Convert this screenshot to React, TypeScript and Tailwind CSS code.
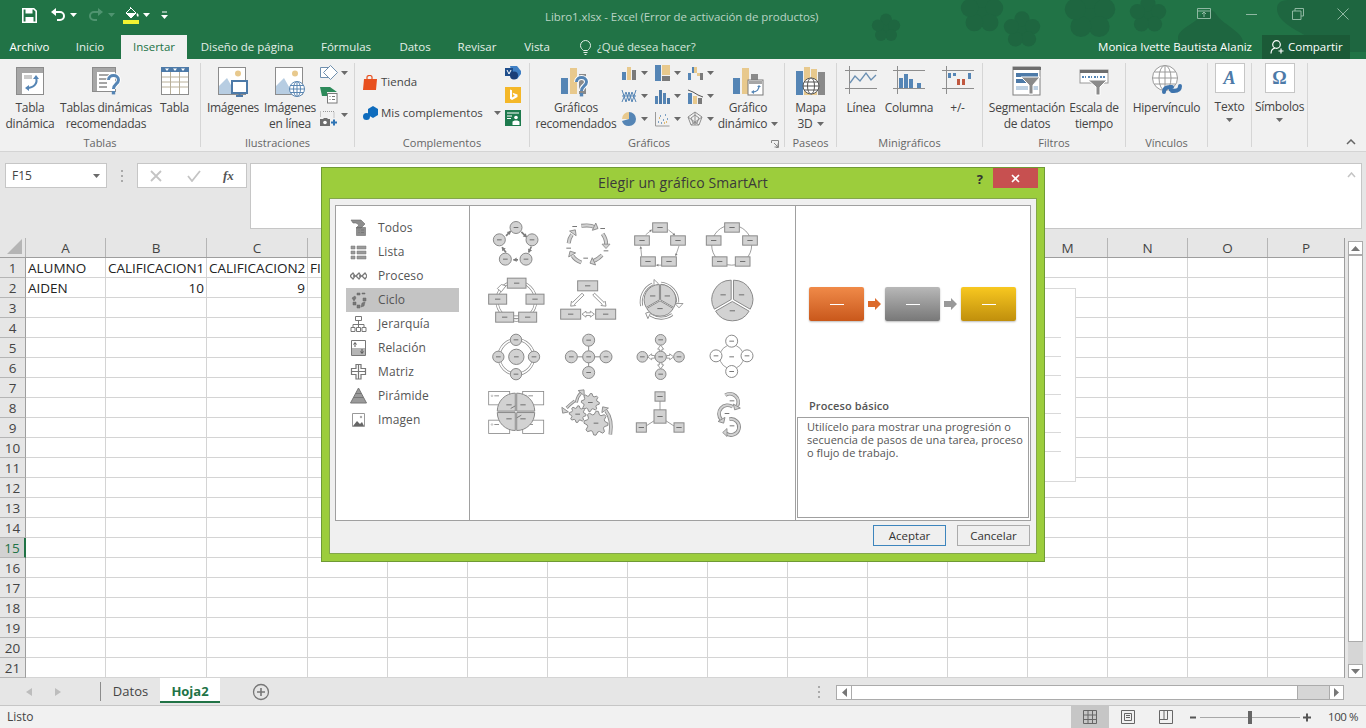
import type { ReactNode } from 'react'

const BLUE = '#5585b5'
const TAN = '#e8c98d'
const GREY = '#a6a6a6'
const STROKE = '#8a8a8a'
const FILL = '#d2d2d2'
const DASH = '#5c5c5c'

const COLUMNS: [string, number][] = [
  ['A', 80], ['B', 101], ['C', 101], ['D', 80], ['E', 80], ['F', 80], ['G', 80], ['H', 80],
  ['I', 80], ['J', 80], ['K', 80], ['L', 80], ['M', 80], ['N', 80], ['O', 80], ['P', 76],
]

const ROWS: Record<number, Record<string, { text: string; right?: boolean }>> = {
  1: {
    A: { text: 'ALUMNO' },
    B: { text: 'CALIFICACION1' },
    C: { text: 'CALIFICACION2' },
    D: { text: 'FINAL' },
  },
  2: {
    A: { text: 'AIDEN' },
    B: { text: '10', right: true },
    C: { text: '9', right: true },
  },
}

function Caret({ className = '' }: { className?: string }) {
  return (
    <svg width="7" height="4" viewBox="0 0 7 4" className={className}>
      <path d="M0 0h7L3.5 4z" fill="#6a6a6a" />
    </svg>
  )
}

/* ---------- ribbon icons ---------- */

function HelpMark({ x, y, scale = 1 }: { x: number; y: number; scale?: number }) {
  return (
    <g transform={`translate(${x} ${y}) scale(${scale})`}>
      <path d="M1.500 5C1.500-1 11.500-1 11.500 5c0 4-5 4-5 9" fill="none" stroke="#fff" strokeWidth="5" />
      <path d="M1.500 5C1.500-1 11.500-1 11.500 5c0 4-5 4-5 9" fill="none" stroke={BLUE} strokeWidth="3" />
      <rect x="4.800" y="16" width="3.400" height="3.400" fill={BLUE} />
    </g>
  )
}

function IconPivot() {
  return (
    <svg width="30" height="30" viewBox="0 0 30 30">
      <rect x="1.5" y="1.5" width="27" height="27" fill="#fff" stroke="#8c8c8c" />
      <rect x="2" y="2" width="26" height="5" fill={GREY} />
      <rect x="2" y="7" width="5" height="21" fill={GREY} />
      <rect x="9" y="9" width="8" height="4" fill={GREY} opacity="0.6" />
      <path d="M21 12c2 5-2 10-9 10" fill="none" stroke={BLUE} strokeWidth="2" />
      <path d="M18 13l3-4 3 4zM14 19l-4 3 4 3z" fill={BLUE} />
    </svg>
  )
}

function IconPivotHelp() {
  return (
    <svg width="30" height="30" viewBox="0 0 30 30">
      <rect x="1.5" y="1.5" width="23" height="24" fill="#fff" stroke="#8c8c8c" />
      <rect x="2" y="2" width="22" height="4" fill={GREY} />
      <rect x="2" y="6" width="4" height="19" fill={GREY} />
      <path d="M8 9h10M8 13h8M8 17h8M8 21h8" stroke={GREY} strokeWidth="2" />
      <HelpMark x={16} y={9} />
    </svg>
  )
}

function IconTable() {
  return (
    <svg width="30" height="30" viewBox="0 0 30 30">
      <rect x="1.5" y="1.5" width="27" height="27" fill="#fff" stroke="#8c8c8c" />
      <rect x="1" y="1" width="28" height="5" fill="#4d7aa8" />
      <path d="M5 2.500h4L7 5zM13 2.500h4L15 5zM21 2.500h4L23 5z" fill="#fff" />
      <path d="M2 11h26M2 16h26M2 21h26M10.500 6v22M19.500 6v22" stroke="#b9b09a" />
    </svg>
  )
}

function IconPicture({ badge }: { badge: ReactNode }) {
  return (
    <svg width="32" height="32" viewBox="0 0 32 32">
      <rect x="1.500" y="1.500" width="27" height="27" fill="#fff" stroke="#8c8c8c" />
      <circle cx="21" cy="7.500" r="3" fill={TAN} />
      <path d="M2 28V20l8-8 9 16z" fill="#b7cde2" />
      {badge}
    </svg>
  )
}

const MONITOR = (
  <g>
    <rect x="15" y="15" width="15" height="12" fill="#fff" stroke="#4d7aa8" strokeWidth="2" />
    <path d="M19 30h7M22.500 27v3" stroke="#4d7aa8" strokeWidth="2" />
  </g>
)

const GLOBE = (
  <g fill="#fff" stroke="#5a86b2">
    <circle cx="23" cy="23" r="7.500" />
    <ellipse cx="23" cy="23" rx="3.500" ry="7.500" />
    <path d="M15.500 23h15M16.500 19.500h13M16.500 26.500h13M23 15.500v15" />
  </g>
)

function IconShapes() {
  return (
    <svg width="18" height="15" viewBox="0 0 18 15">
      <path d="M.5 2.500h10v10H.5z" fill="#fff" stroke="#6f8fae" />
      <path d="M10.500.5l7 7-7 7-7-7z" fill="#fff" stroke="#6f8fae" />
    </svg>
  )
}

function IconSmartArtSmall() {
  return (
    <svg width="18" height="17" viewBox="0 0 18 17">
      <path d="M0 0h10l7 5H7v4H2z" fill="#2d8a5a" />
      <rect x="7.500" y="6.500" width="9.500" height="9.500" fill="#fff" stroke="#7a7a7a" />
      <path d="M9.500 9.500h1M12 9.500h3M9.500 12.500h1M12 12.500h3" stroke="#7a7a7a" />
    </svg>
  )
}

function IconScreenshot() {
  return (
    <svg width="18" height="16" viewBox="0 0 18 16">
      <path d="M3 .5h11v6" fill="none" stroke="#999" strokeDasharray="1 1" />
      <path d="M.500 .5v6" stroke="#999" strokeDasharray="1 1" />
      <path d="M0 8h3l1-1h3l1 1h2v7H0z" fill="#6e6e6e" />
      <circle cx="5" cy="11.500" r="1.800" fill="#fff" />
      <path d="M11 11.500h6M14 8.500v6" stroke="#2f75b5" strokeWidth="2" />
    </svg>
  )
}

function IconStore() {
  return (
    <svg width="15" height="15" viewBox="0 0 15 15" className="shrink-0">
      <path d="M1 4h13l-1 11H0z" fill="#e8501f" />
      <path d="M4 5V2c0-2 5-2 5 0v3" fill="none" stroke="#e8501f" strokeWidth="1.200" />
    </svg>
  )
}

function IconAddins() {
  return (
    <svg width="15" height="15" viewBox="0 0 15 15" className="shrink-0">
      <path d="M5 3l5-3 5 3v6l-5 3-5-3z" fill="#0f6cbd" />
      <circle cx="3.500" cy="10.500" r="3.500" fill="#0f6cbd" />
    </svg>
  )
}

function IconVisio() {
  return (
    <svg width="16" height="14" viewBox="0 0 16 14">
      <path d="M5 0h7l4 5v3l-4 5H8z" fill="#3f7fc4" />
      <rect x="0" y="2" width="8" height="8" fill="#1f4e8c" />
      <circle cx="9" cy="9.500" r="4" fill="#1b3f78" />
      <path d="M2 4l2 4 2-4" stroke="#fff" fill="none" />
    </svg>
  )
}

function IconBing() {
  return (
    <svg width="16" height="16" viewBox="0 0 16 16">
      <rect width="16" height="16" fill="#f4b728" />
      <path d="M5 2.500l2 .8v7.200l3-1.700-1.500-.8-1-2.300 5 1.800v2.500L7 13l-2-1.200z" fill="#fff" />
    </svg>
  )
}

function IconPeople() {
  return (
    <svg width="16" height="16" viewBox="0 0 16 16">
      <rect width="16" height="16" fill="#1d7a4d" />
      <path d="M2 3h12M2 6h5M2 8.500h4" stroke="#fff" />
      <circle cx="11" cy="7.500" r="1.800" fill="#fff" />
      <path d="M7.500 15v-3c0-2 7-2 7 0v3z" fill="#fff" />
    </svg>
  )
}

function IconBars({ help, pivot }: { help?: boolean; pivot?: boolean }) {
  return (
    <svg width="32" height="32" viewBox="0 0 32 32">
      <rect x="1" y="12" width="7" height="16" fill={BLUE} />
      <rect x="10" y="2" width="7" height="26" fill={TAN} />
      <rect x="19" y="8" width="7" height="20" fill="#8a8a8a" />
      {help && <HelpMark x={15} y={11} />}
      {pivot && (
        <g>
          <rect x="16" y="14" width="15" height="15" fill="#fff" stroke="#7a7a7a" />
          <rect x="17" y="15" width="13" height="3" fill={GREY} />
          <path d="M27 20c0 3-2 6-6 6" fill="none" stroke={BLUE} strokeWidth="1.400" />
          <path d="M25 21l2-2 2 2zM22 24l-3 2 3 2z" fill={BLUE} />
        </g>
      )}
    </svg>
  )
}

function MiniChart({ kind }: { kind: number }) {
  const body: Record<number, ReactNode> = {
    0: <><rect x="1" y="7" width="4" height="8" fill={BLUE} /><rect x="6" y="2" width="4" height="13" fill={TAN} /><rect x="11" y="5" width="4" height="10" fill="#7a7a7a" /></>,
    1: <><rect x="1" y="0" width="6" height="16" fill={BLUE} /><rect x="8" y="0" width="8" height="10" fill={TAN} /><rect x="8" y="11" width="8" height="5" fill="#7a7a7a" /></>,
    2: <><rect x="1" y="8" width="3" height="7" fill={BLUE} /><rect x="5" y="2" width="2" height="6" fill={BLUE} /><rect x="7" y="2" width="3" height="6" fill={TAN} /><rect x="10" y="8" width="3" height="3" fill={TAN} /><rect x="13" y="8" width="3" height="7" fill="#7a7a7a" /></>,
    3: <path d="M1 2l4 12 3-10 3 10 4-12M1 14l4-10 3 9 3-9 4 10M1 8h14" fill="none" stroke={BLUE} />,
    4: <><rect x="1" y="8" width="3" height="8" fill={BLUE} /><rect x="5" y="2" width="3" height="14" fill="#4d7aa8" /><rect x="9" y="5" width="3" height="11" fill={BLUE} /><rect x="13" y="10" width="3" height="6" fill="#4d7aa8" /></>,
    5: <><rect x="1" y="5" width="4" height="11" fill={BLUE} /><rect x="6" y="8" width="4" height="8" fill={TAN} /><rect x="11" y="10" width="4" height="6" fill="#7a7a7a" /><path d="M1 2l5 2 5 3 5 2" stroke="#555" fill="none" /></>,
    6: <><path d="M8 8V1a7 7 0 0 1 0 14 7 7 0 0 1-7-5z" fill={BLUE} /><path d="M8 8H1a7 7 0 0 1 7-7z" fill={TAN} /></>,
    7: <><path d="M1.500 1v14h14" fill="none" stroke="#9a9a9a" /><path d="M4 11h1M6 5h1M9 9h1M11 4h1M13 8h1M7 12h1" stroke={BLUE} strokeWidth="1.500" /><path d="M5 7h1M10 12h1M12 11h1" stroke="#d8a84c" strokeWidth="1.500" /></>,
    8: <path d="M8 1l7 5-3 8H4L1 6zM8 4l4 3-2 5H6L4 7zM8 1v13M1 6l11 8M15 6L4 14" fill="none" stroke="#8f8f8f" />,
  }
  return (
    <svg width="17" height="16" viewBox="0 0 17 16">
      {body[kind]}
    </svg>
  )
}

function IconMap3D() {
  return (
    <svg width="30" height="32" viewBox="0 0 30 32">
      <rect x="0" y="5" width="7" height="24" fill={BLUE} />
      <rect x="8" y="1" width="6" height="28" fill={TAN} />
      <rect x="15" y="3" width="6" height="26" fill={TAN} />
      <rect x="22" y="6" width="7" height="23" fill="#8a8a8a" />
      <g fill="#fff" stroke="#555">
        <circle cx="15" cy="20" r="8" />
        <ellipse cx="15" cy="20" rx="3.500" ry="8" />
        <path d="M7 20h16M8 16h14M8 24h14" />
      </g>
    </svg>
  )
}

function Sparkline({ kind }: { kind: 'line' | 'column' | 'plus' }) {
  return (
    <svg width="32" height="28" viewBox="0 0 32 28">
      <path d="M0 4.500h32M0 22.500h32M4.500 0v28" stroke="#8e8e8e" />
      {kind === 'line' && <path d="M5 17l5-7 5 5 6-8 5 7 5-5" fill="none" stroke="#6a8fb2" strokeWidth="1.300" />}
      {kind === 'column' && (
        <>
          <rect x="6" y="12" width="4" height="10" fill={BLUE} />
          <rect x="11" y="8" width="4" height="14" fill={BLUE} />
          <rect x="16" y="13" width="4" height="9" fill={BLUE} />
          <rect x="24" y="17" width="4" height="5" fill={BLUE} />
        </>
      )}
      {kind === 'plus' && (
        <>
          <rect x="6" y="7" width="3" height="5" fill={BLUE} />
          <rect x="11" y="7" width="3" height="3" fill={BLUE} />
          <rect x="15" y="13" width="3" height="6" fill="#c0583f" />
          <rect x="20" y="13" width="3" height="6" fill="#c0583f" />
          <rect x="26" y="7" width="3" height="6" fill={BLUE} />
        </>
      )}
    </svg>
  )
}

function IconSlicer() {
  return (
    <svg width="30" height="30" viewBox="0 0 30 30">
      <rect x="1" y="1" width="27" height="28" fill="#fff" stroke="#808080" />
      <rect x="1" y="1" width="28" height="3" fill="#6e6e6e" />
      <rect x="4" y="7" width="22" height="4" fill="#4d7aa8" />
      <rect x="4" y="13" width="11" height="4" fill="#4d7aa8" />
      <rect x="4" y="20" width="12" height="4" fill="#bdd0e2" />
      <rect x="20" y="20" width="6" height="4" fill="#bdd0e2" />
      <path d="M9 11h19l-7 8v9h-4v-9z" fill="#8a8a8a" stroke="#fff" />
    </svg>
  )
}

function IconTimeline() {
  return (
    <svg width="30" height="30" viewBox="0 0 30 30">
      <rect x="1" y="4" width="28" height="13" fill="#fff" stroke="#999" />
      <rect x="1" y="4" width="28" height="3" fill="#6e6e6e" />
      <path d="M3 11h4M9 11h4M15 11h4M21 11h6" stroke={BLUE} strokeWidth="2" strokeDasharray="2 1" />
      <path d="M9 14h19l-7 7v8h-4v-8z" fill="#8a8a8a" stroke="#fff" />
    </svg>
  )
}

function IconLink() {
  return (
    <svg width="34" height="34" viewBox="0 0 34 34">
      <g fill="#fff" stroke="#9a9a9a">
        <circle cx="15" cy="14" r="12.500" />
        <ellipse cx="15" cy="14" rx="6" ry="12.500" />
        <path d="M2.500 14h25M4.500 8h21M4.500 20h21M15 1.500v25" />
      </g>
      <path d="M14 28c0-4 3-5 6-5h2M30 22c0 4-3 5-6 5h-2" fill="none" stroke="#3e74ad" strokeWidth="4" strokeLinecap="round" />
      <path d="M19 26h8" stroke="#3e74ad" strokeWidth="2.500" />
    </svg>
  )
}

/* ---------- ribbon pieces ---------- */

function LargeButton({ width, icon, lines, caret, iconClass = 'pt-[3px]' }: {
  width: number
  icon: ReactNode
  lines: string[]
  caret?: boolean
  iconClass?: string
}) {
  return (
    <div className="flex shrink-0 flex-col items-center" style={{ width }}>
      <div className={`flex h-[37px] w-full items-start justify-center ${iconClass}`}>{icon}</div>
      <div className="whitespace-nowrap text-center text-[12px] leading-[16px] tracking-[-0.25px] text-[#444]">
        {lines.map((line, i) => (
          <div key={line} className="flex items-center justify-center gap-1">
            {line}
            {caret && i === lines.length - 1 && <Caret />}
          </div>
        ))}
      </div>
    </div>
  )
}

function Group({ width, label, launcher, children }: {
  width: number
  label: string
  launcher?: boolean
  children: ReactNode
}) {
  return (
    <div className="relative mt-1 h-[84px] shrink-0 border-r border-[#d6d6d6]" style={{ width }}>
      <div className="flex h-[72px]">{children}</div>
      <div className={`h-4 text-center text-[11px] leading-4 text-[#666] ${launcher ? 'pr-[16px]' : ''}`}>{label}</div>
      {launcher && (
        <svg width="8" height="8" viewBox="0 0 8 8" className="absolute bottom-[-1px] right-[5px]">
          <path d="M.5 3V.5H7.500V7.500H5M3 3l4 4M3.500 7H7V3.500" fill="none" stroke="#888" />
        </svg>
      )}
    </div>
  )
}

function BoxButton({ width, icon, label }: { width: number; icon: ReactNode; label: string }) {
  return (
    <Group width={width} label="">
      <div className="flex w-full flex-col items-center">
        <div className="flex h-[30px] w-[30px] items-center justify-center border border-[#c6c6c6] bg-white">{icon}</div>
        <div className="mt-[6px] whitespace-nowrap text-[12px] leading-4 tracking-[-0.25px] text-[#444]">{label}</div>
        <Caret className="mt-[3px]" />
      </div>
    </Group>
  )
}

function Ribbon() {
  return (
    <div className="flex h-[93px] items-start border-b border-[#d4d4d4] bg-[#f1f1f1]">
      <Group width={201} label="Tablas">
        <LargeButton width={60} icon={<IconPivot />} lines={['Tabla', 'dinámica']} />
        <LargeButton width={92} icon={<IconPivotHelp />} lines={['Tablas dinámicas', 'recomendadas']} />
        <LargeButton width={45} icon={<IconTable />} lines={['Tabla']} />
      </Group>
      <Group width={154} label="Ilustraciones">
        <div className="w-[3px] shrink-0" />
        <LargeButton width={58} icon={<IconPicture badge={MONITOR} />} lines={['Imágenes']} />
        <LargeButton width={56} icon={<IconPicture badge={GLOBE} />} lines={['Imágenes', 'en línea']} />
        <div className="ml-[2px] flex flex-col gap-[7px] pt-[2px]">
          <div className="flex items-center gap-[3px]"><IconShapes /><Caret /></div>
          <IconSmartArtSmall />
          <div className="flex items-center gap-[3px]"><IconScreenshot /><Caret className="mb-2" /></div>
        </div>
      </Group>
      <Group width={175} label="Complementos">
        <div className="w-[150px] shrink-0 whitespace-nowrap pl-[8px] pt-[10px] text-[11.5px] leading-4 text-[#444]">
          <div className="flex h-[18px] items-center gap-[3px]"><IconStore /> Tienda</div>
          <div className="mt-[13px] flex h-[18px] items-center gap-[3px]">
            <IconAddins /> Mis complementos <Caret className="ml-[8px] shrink-0" />
          </div>
        </div>
        <div className="flex flex-col items-center gap-[7px] pt-[3px]">
          <IconVisio />
          <IconBing />
          <IconPeople />
        </div>
      </Group>
      <Group width={255} label="Gráficos" launcher>
        <div className="w-[6px] shrink-0" />
        <LargeButton width={80} icon={<IconBars help />} lines={['Gráficos', 'recomendados']} />
        <div className="-mr-[3px] ml-[5px] grid w-[99px] shrink-0 grid-cols-3 content-start gap-y-[7px] pt-[2px]">
          {[0, 1, 2, 3, 4, 5, 6, 7, 8].map((kind) => (
            <div key={kind} className="flex items-center gap-[3px]">
              <MiniChart kind={kind} />
              <Caret />
            </div>
          ))}
        </div>
        <LargeButton width={62} icon={<IconBars pivot />} lines={['Gráfico', 'dinámico']} caret />
      </Group>
      <Group width={52} label="Paseos">
        <LargeButton width={51} icon={<IconMap3D />} lines={['Mapa', '3D']} caret />
      </Group>
      <Group width={146} label="Minigráficos">
        <LargeButton width={48} icon={<Sparkline kind="line" />} lines={['Línea']} />
        <LargeButton width={48} icon={<Sparkline kind="column" />} lines={['Columna']} />
        <LargeButton width={49} icon={<Sparkline kind="plus" />} lines={['+/-']} />
      </Group>
      <Group width={143} label="Filtros">
        <div className="w-[6px] shrink-0" />
        <LargeButton width={76} icon={<IconSlicer />} lines={['Segmentación', 'de datos']} />
        <LargeButton width={58} icon={<IconTimeline />} lines={['Escala de', 'tiempo']} />
      </Group>
      <Group width={82} label="Vínculos">
        <LargeButton width={81} icon={<IconLink />} lines={['Hipervínculo']} iconClass="pt-[1px]" />
      </Group>
      <BoxButton width={44} label="Texto" icon={<span className="font-['Liberation_Serif',serif] text-[18px] font-bold italic text-[#4d7aa8]">A</span>} />
      <BoxButton width={56} label="Símbolos" icon={<span className="font-['Liberation_Serif',serif] text-[18px] font-bold text-[#4d7aa8]">Ω</span>} />
      <div className="relative flex-1 self-stretch">
        <svg width="10" height="6" viewBox="0 0 10 6" className="absolute bottom-[6px] right-[10px]">
          <path d="M1 5l4-4 4 4" fill="none" stroke="#666" strokeWidth="1.500" />
        </svg>
      </div>
    </div>
  )
}

/* ---------- title bar ---------- */

function Flower({ x, y, r }: { x: number; y: number; r: number }) {
  return (
    <g>
      <circle cx={x} cy={y} r={r * 0.62} />
      {[0, 1, 2, 3, 4].map((i) => {
        const a = (-90 + i * 72) * (Math.PI / 180)
        return <circle key={i} cx={x + Math.cos(a) * r * 0.62} cy={y + Math.sin(a) * r * 0.62} r={r * 0.42} />
      })}
    </g>
  )
}

function TitleArt() {
  return (
    <svg width="500" height="59" viewBox="866 0 500 59" className="absolute right-0 top-0" fill="#1e6640">
      <Flower x={886} y={28} r={14} />
      <Flower x={982} y={12} r={21} />
      <Flower x={1022} y={30} r={18} />
      <Flower x={1090} y={14} r={25} />
      <Flower x={1148} y={15} r={18} />
      <path d="M1178 38c0-10 18-14 24-24 4-6 10-6 14 0 6 10 27 18 27 28 0 9-10 10-20 10h-30c-10 0-15-5-15-14z" />
      <path d="M1277 9c0-8 6-9 14-9h75v52h-34c-8 0-14-6-20-12-9-8-35-16-35-31z" />
    </svg>
  )
}

function QuickAccess() {
  return (
    <div className="flex h-[30px] items-center pl-[22px]">
      <svg width="15" height="15" viewBox="0 0 15 15">
        <path d="M.8.8h11l2.400 2.400v11H.8z" fill="none" stroke="#fff" strokeWidth="1.600" />
        <rect x="3.500" y="1" width="7" height="4.500" fill="#fff" />
        <rect x="3.500" y="9" width="8" height="5" fill="#fff" />
      </svg>
      <svg width="15" height="14" viewBox="0 0 15 14" className="ml-[13px]">
        <path d="M3 4h7a4 4 0 0 1 0 8H7" fill="none" stroke="#fff" strokeWidth="2" />
        <path d="M6 0L1 4l5 4z" fill="#fff" />
      </svg>
      <Caret className="ml-[5px] [&>path]:fill-white" />
      <svg width="15" height="14" viewBox="0 0 15 14" className="ml-[12px]">
        <path d="M12 4H5a4 4 0 0 0 0 8h3" fill="none" stroke="#4f9470" strokeWidth="2" />
        <path d="M9 0l5 4-5 4z" fill="#4f9470" />
      </svg>
      <Caret className="ml-[4px] [&>path]:fill-[#4f9470]" />
      <svg width="16" height="18" viewBox="0 0 16 18" className="ml-[8px]">
        <path d="M3 7l5-5 5 5-5 5zM7 1l1 1" fill="none" stroke="#fff" />
        <path d="M3 7h10l-5 5zM14 7c2 1 2 3 1 4-1-1-2-2-1-4z" fill="#fff" />
        <rect x="0" y="14" width="16" height="4" fill="#f2f232" />
      </svg>
      <Caret className="ml-[4px] [&>path]:fill-white" />
      <svg width="7" height="8" viewBox="0 0 7 8" className="ml-[11px]">
        <path d="M1 1h5" stroke="#fff" />
        <path d="M0 4h7L3.500 8z" fill="#fff" />
      </svg>
    </div>
  )
}

const TABS: [string, number][] = [
  ['Inicio', 62], ['Insertar', 66], ['Diseño de página', 120], ['Fórmulas', 78],
  ['Datos', 60], ['Revisar', 64], ['Vista', 56],
]

function TitleBar() {
  return (
    <div className="relative h-[59px] bg-[#217346]">
      <TitleArt />
      <div className="relative h-[35px]">
        <QuickAccess />
        <div className="absolute left-[545px] top-[9px] whitespace-nowrap text-[11.5px] leading-4 tracking-[-0.1px] text-[#b9d3c4]">
          Libro1.xlsx - Excel (Error de activación de productos)
        </div>
        <div className="absolute right-[17px] top-[8px] flex items-center gap-[33px]">
          <svg width="14" height="12" viewBox="0 0 14 12">
            <path d="M.5.5h13v10H.5zM.5 3h13M7 9V4.500M5 6l2-2 2 2" fill="none" stroke="#8fb8a2" />
          </svg>
          <svg width="15" height="12" viewBox="0 0 15 12">
            <path d="M2 6.500h11" stroke="#8fb8a2" />
          </svg>
          <svg width="12" height="12" viewBox="0 0 12 12">
            <path d="M3 3V.5h8.500V8H9M.5 3h8.500v8.500H.5z" fill="none" stroke="#8fb8a2" />
          </svg>
          <svg width="12" height="12" viewBox="0 0 12 12">
            <path d="M.5.5l11 11M11.500.5l-11 11" stroke="#8fb8a2" />
          </svg>
        </div>
      </div>
      <div className="relative flex h-6 items-stretch text-[11.5px] leading-6 text-[#e4efe8]">
        <div className="w-[59px] text-center text-white">Archivo</div>
        {TABS.map(([name, w]) => (
          <div
            key={name}
            style={{ width: w }}
            className={`text-center ${name === 'Insertar' ? 'bg-[#f1f1f1] text-[#217346]' : ''}`}
          >
            {name}
          </div>
        ))}
        <div className="ml-[14px] flex items-center gap-[5px] tracking-[-0.1px] text-[#d5e5db]">
          <svg width="13" height="15" viewBox="0 0 13 15">
            <path d="M4.500 10.500C3 9 1.500 8 1.500 5.500a5 5 0 0 1 10 0c0 2.500-1.500 3.500-3 5zM4.500 12.500h4M5.500 14.500h2" fill="none" stroke="#e4efe8" />
          </svg>
          ¿Qué desea hacer?
        </div>
        <div className="ml-auto flex items-center">
          <span className="text-white">Monica Ivette Bautista Alaniz</span>
          <div className="ml-[10px] mr-[16px] flex w-[88px] items-center gap-[3px] bg-[#1b5a37] pl-[8px] text-white">
            <svg width="15" height="14" viewBox="0 0 15 14">
              <circle cx="6.500" cy="4.500" r="3.800" fill="none" stroke="#fff" strokeWidth="1.200" />
              <path d="M1 13.500c0-3 2-5 4-5.500M11 8.500v5M8.500 11h5" fill="none" stroke="#fff" strokeWidth="1.200" />
            </svg>
            Compartir
          </div>
        </div>
      </div>
    </div>
  )
}

/* ---------- formula bar and sheet ---------- */

function FormulaBar() {
  return (
    <div className="flex h-[86px] items-start bg-[#e6e6e6] pt-[11px]">
      <div className="ml-[5px] flex h-[25px] w-[102px] items-center justify-between border border-[#c6c6c6] bg-white pl-[6px] pr-[6px] text-[12px] text-[#444]">
        F15
        <Caret />
      </div>
      <div className="ml-[14px] flex h-[25px] flex-col justify-center gap-[3px]">
        <span className="h-[2px] w-[2px] bg-[#aaa]" />
        <span className="h-[2px] w-[2px] bg-[#aaa]" />
        <span className="h-[2px] w-[2px] bg-[#aaa]" />
      </div>
      <div className="ml-[14px] flex h-[25px] w-[110px] items-center border border-[#c6c6c6] bg-white pl-[12px]">
        <svg width="12" height="12" viewBox="0 0 12 12">
          <path d="M1 1l10 10M11 1L1 11" stroke="#c4c4c4" strokeWidth="1.800" />
        </svg>
        <svg width="14" height="12" viewBox="0 0 14 12" className="ml-[25px]">
          <path d="M1 6l4 5 8-10" fill="none" stroke="#c4c4c4" strokeWidth="1.800" />
        </svg>
        <span className="ml-[22px] font-['Liberation_Serif',serif] text-[13px] font-bold italic text-[#555]">fx</span>
      </div>
      <div className="relative ml-[3px] h-[66px] w-[1112px] border border-[#c6c6c6] bg-white">
        <svg width="9" height="6" viewBox="0 0 9 6" className="absolute right-[5px] top-[8px]">
          <path d="M1 5l3.500-4L8 5" fill="none" stroke="#c4c4c4" strokeWidth="1.500" />
        </svg>
      </div>
    </div>
  )
}

function Sheet() {
  return (
    <div className="flex h-[440px] bg-[#e6e6e6]">
      <div className="flex w-[1345px] flex-col border-r border-[#9e9e9e]">
        <div className="flex h-5 shrink-0 border-b border-[#9e9e9e] text-[13.5px] leading-[20px] text-[#444]">
          <div className="flex w-[26px] items-end justify-end border-r border-[#b5b5b5] pb-[3px] pr-[3px]">
            <svg width="15" height="15" viewBox="0 0 15 15"><path d="M15 0v15H0z" fill="#b5b5b5" /></svg>
          </div>
          {COLUMNS.map(([name, w]) => (
            <div key={name} style={{ width: w }} className="shrink-0 border-r border-[#b5b5b5] text-center last:border-r-0">
              {name}
            </div>
          ))}
        </div>
        {Array.from({ length: 21 }, (_, i) => i + 1).map((row) => (
          <div key={row} className="flex h-5 shrink-0 text-[13.5px] leading-[21px] text-[#222]">
            <div className={`w-[26px] shrink-0 border-b border-[#b5b5b5] text-center ${row === 15 ? 'border-r-2 border-r-[#217346] bg-[#d2d2d2] text-[#217346]' : 'border-r border-r-[#9e9e9e] text-[#444]'}`}>
              {row}
            </div>
            {COLUMNS.map(([name, w]) => {
              const cell = ROWS[row]?.[name]
              return (
                <div
                  key={name}
                  style={{ width: w }}
                  className={`shrink-0 overflow-hidden whitespace-nowrap border-b border-r border-[#d4d4d4] bg-white px-[2px] last:border-r-0 ${cell?.right ? 'text-right' : ''}`}
                >
                  {cell?.text}
                </div>
              )
            })}
          </div>
        ))}
      </div>
      <div className="ml-[3px] flex w-[15px] flex-col pt-[3px]">
        <div className="flex h-[14px] items-center justify-center border border-[#ababab] bg-white">
          <svg width="9" height="5" viewBox="0 0 9 5"><path d="M0 5h9L4.500 0z" fill="#777" /></svg>
        </div>
        <div className="h-[387px] border border-[#ababab] bg-white" />
        <div className="flex-1 bg-[#d6d6d6]" />
        <div className="flex h-[14px] items-center justify-center border border-[#ababab] bg-white">
          <svg width="9" height="5" viewBox="0 0 9 5"><path d="M0 0h9L4.500 5z" fill="#777" /></svg>
        </div>
      </div>
    </div>
  )
}

function SheetTabs() {
  return (
    <div className="flex h-[28px] border-b border-[#c6c6c6] bg-[#e6e6e6] text-[13px]">
      <div className="flex w-[100px] items-center pl-[26px]">
        <svg width="6" height="8" viewBox="0 0 6 8"><path d="M6 0v8L0 4z" fill="#bdbdbd" /></svg>
        <svg width="6" height="8" viewBox="0 0 6 8" className="ml-[23px]"><path d="M0 0v8l6-4z" fill="#bdbdbd" /></svg>
      </div>
      <div className="my-[4px] w-px bg-[#8c8c8c]" />
      <div className="w-[59px] pt-[3px] text-center leading-[20px] text-[#444]">Datos</div>
      <div className="h-[25px] w-[60px] border-b-2 border-[#217346] bg-white pt-[3px] text-center font-bold leading-[20px] text-[#217346]">Hoja2</div>
      <svg width="18" height="18" viewBox="0 0 18 18" className="ml-[32px] mt-[5px]">
        <circle cx="9" cy="9" r="7.500" fill="none" stroke="#777" strokeWidth="1.300" />
        <path d="M5 9h8M9 5v8" stroke="#777" strokeWidth="1.600" />
      </svg>
      <div className="ml-auto flex items-start pt-[7px]">
        <div className="mr-[16px] flex h-[14px] flex-col justify-between py-[1px]">
          <span className="h-[2px] w-[2px] bg-[#aaa]" />
          <span className="h-[2px] w-[2px] bg-[#aaa]" />
          <span className="h-[2px] w-[2px] bg-[#aaa]" />
        </div>
        <div className="flex h-[15px] w-[508px] border border-[#ababab] bg-[#d6d6d6]">
          <div className="flex w-[15px] items-center justify-center border-r border-[#ababab] bg-white">
            <svg width="5" height="9" viewBox="0 0 5 9"><path d="M5 0v9L0 4.500z" fill="#777" /></svg>
          </div>
          <div className="w-[446px] border-r border-[#ababab] bg-white" />
          <div className="flex-1" />
          <div className="flex w-[14px] items-center justify-center border-l border-[#ababab] bg-white">
            <svg width="5" height="9" viewBox="0 0 5 9"><path d="M0 0v9l5-4.500z" fill="#777" /></svg>
          </div>
        </div>
        <div className="w-[22px]" />
      </div>
    </div>
  )
}

function StatusBar() {
  return (
    <div className="flex h-[22px] items-center bg-[#f1f1f1] text-[12px] text-[#444]">
      <span className="pl-[7px]">Listo</span>
      <div className="ml-auto flex h-full items-center">
        <div className="flex h-full w-[38px] items-center justify-center bg-[#c6c6c6]">
          <svg width="14" height="14" viewBox="0 0 14 14">
            <path d="M.5.5h13v13H.5zM5 .5v13M9.500.5v13M.5 5h13M.5 9.500h13" fill="none" stroke="#666" />
          </svg>
        </div>
        <div className="flex h-full w-[38px] items-center justify-center">
          <svg width="14" height="14" viewBox="0 0 14 14">
            <path d="M.5.5h13v13H.5zM3.500 3.500h7v7h-7zM5 5.500h4M5 7.500h4" fill="none" stroke="#666" />
          </svg>
        </div>
        <div className="flex h-full w-[38px] items-center justify-center">
          <svg width="14" height="14" viewBox="0 0 14 14">
            <path d="M.5.5h13v13H.5zM.5 9.500h8M8.500.5v9M5 9.500V.5" fill="none" stroke="#666" />
          </svg>
        </div>
        <svg width="124" height="16" viewBox="0 0 124 16" className="ml-[5px]">
          <path d="M0 8.500h6" stroke="#555" strokeWidth="2" />
          <path d="M10 8.500h100" stroke="#a8a8a8" />
          <rect x="58" y="2" width="4" height="13" fill="#666" />
          <path d="M113 8.500h8M117 4.500v8" stroke="#555" strokeWidth="2" />
        </svg>
        <span className="ml-[14px] w-[38px] text-[11.5px] tracking-[-0.4px]">100 %</span>
      </div>
    </div>
  )
}

/* ---------- SmartArt thumbnails, drawn in 3x crop units ---------- */

function Round({ x, y, r = 18, fill = FILL }: { x: number; y: number; r?: number; fill?: string }) {
  return (
    <g>
      <circle cx={x} cy={y} r={r} fill={fill} stroke={STROKE} strokeWidth="3" />
      <path d={`M${x - 7} ${y}h14`} stroke={DASH} strokeWidth="2.500" />
    </g>
  )
}

function Box({ x, y, w = 44, h = 28 }: { x: number; y: number; w?: number; h?: number }) {
  return (
    <g>
      <rect x={x - w / 2} y={y - h / 2} width={w} height={h} fill={FILL} stroke={STROKE} strokeWidth="3" />
      <path d={`M${x - 8} ${y}h16`} stroke={DASH} strokeWidth="2.500" />
    </g>
  )
}

function Arr({ a, b, w = 3, head = 8, color = '#7c7c7c' }: { a: [number, number]; b: [number, number]; w?: number; head?: number; color?: string }) {
  const t = Math.atan2(b[1] - a[1], b[0] - a[0])
  const l = (ang: number) => `${b[0] - Math.cos(t + ang) * head * 1.5},${b[1] - Math.sin(t + ang) * head * 1.5}`
  return (
    <g>
      <line x1={a[0]} y1={a[1]} x2={b[0]} y2={b[1]} stroke={color} strokeWidth={w} />
      <polygon points={`${b[0]},${b[1]} ${l(0.6)} ${l(-0.6)}`} fill={color} />
    </g>
  )
}

function Hollow({ a, b, both }: { a: [number, number]; b: [number, number]; both?: boolean }) {
  const t = Math.atan2(b[1] - a[1], b[0] - a[0])
  const len = Math.hypot(b[0] - a[0], b[1] - a[1])
  const h = 12
  const start = both ? `${h},-9 ${h},-4` : '0,-4'
  const end = both ? `${h},4 ${h},9 0,0` : '0,4'
  const pts = both
    ? `0,0 ${start} ${len - h},-4 ${len - h},-9 ${len},0 ${len - h},9 ${len - h},4 ${end}`
    : `${start} ${len - h},-4 ${len - h},-9 ${len},0 ${len - h},9 ${len - h},4 ${end}`
  return (
    <polygon
      transform={`translate(${a[0]} ${a[1]}) rotate(${(t * 180) / Math.PI})`}
      points={pts}
      fill="#fff"
      stroke={STROKE}
      strokeWidth="2.500"
    />
  )
}

function Band({ d, tip, angle, inner = FILL, width = 12 }: { d: string; tip: [number, number]; angle: number; inner?: string; width?: number }) {
  return (
    <g fill="none">
      <path d={d} stroke={STROKE} strokeWidth={width} />
      <path d={d} stroke={inner} strokeWidth={width - 5} />
      <polygon
        transform={`translate(${tip[0]} ${tip[1]}) rotate(${angle})`}
        points="0,0 -13,-12 -13,12"
        fill={inner}
        stroke={STROKE}
        strokeWidth="2.500"
      />
    </g>
  )
}

function Slice({ x, y, r, from, to, gap = 4 }: { x: number; y: number; r: number; from: number; to: number; gap?: number }) {
  const mid = ((from + to) / 2) * (Math.PI / 180)
  const cx = x + Math.cos(mid) * gap
  const cy = y + Math.sin(mid) * gap
  const p = (deg: number) => `${cx + Math.cos((deg * Math.PI) / 180) * r} ${cy + Math.sin((deg * Math.PI) / 180) * r}`
  const large = to - from > 180 ? 1 : 0
  return (
    <g>
      <path d={`M${cx} ${cy}L${p(from)}A${r} ${r} 0 ${large} 1 ${p(to)}Z`} fill={FILL} stroke={STROKE} strokeWidth="3" />
      <path d={`M${x + Math.cos(mid) * r * 0.55 - 8} ${y + Math.sin(mid) * r * 0.55}h16`} stroke={DASH} strokeWidth="2.500" />
    </g>
  )
}

function Gear({ x, y, r }: { x: number; y: number; r: number }) {
  const teeth = 8
  const pts: string[] = []
  for (let i = 0; i < teeth * 4; i++) {
    const a = (i / (teeth * 4)) * Math.PI * 2
    const rad = i % 4 < 2 ? r : r * 0.75
    pts.push(`${x + Math.cos(a) * rad},${y + Math.sin(a) * rad}`)
  }
  return (
    <g>
      <polygon points={pts.join(' ')} fill={FILL} stroke={STROKE} strokeWidth="3" strokeLinejoin="round" />
      <path d={`M${x - 7} ${y}h14`} stroke={DASH} strokeWidth="2.500" />
    </g>
  )
}

function dash(x: number, y: number) {
  return <path d={`M${x - 7} ${y}h14`} stroke={DASH} strokeWidth="2.500" />
}

function ring(x: number, y: number, r: number) {
  return (
    <g fill="none">
      <circle cx={x} cy={y} r={r} stroke={STROKE} strokeWidth="9" />
      <circle cx={x} cy={y} r={r} stroke="#fff" strokeWidth="5" />
    </g>
  )
}

const THUMBS: ReactNode[] = [
  <>
    <Arr a={[92, 90]} b={[106, 76]} w={5} />
    <Arr a={[138, 78]} b={[154, 94]} w={5} />
    <Arr a={[168, 122]} b={[160, 140]} w={5} />
    <Arr a={[128, 162]} b={[114, 162]} w={5} />
    <Arr a={[92, 140]} b={[80, 124]} w={5} />
    <Round x={122} y={65} /><Round x={170} y={102} /><Round x={152} y={160} /><Round x={90} y={160} /><Round x={72} y={102} />
  </>,
  <>
    <Band d="M318 60Q345 56 358 64" tip={[368, 68]} angle={25} />
    <Band d="M382 84Q394 102 392 116" tip={[392, 128]} angle={90} />
    <Band d="M380 148Q366 162 354 166" tip={[344, 172]} angle={155} />
    <Band d="M318 170Q298 162 292 150" tip={[284, 136]} angle={240} />
    <Band d="M280 112Q282 96 290 86" tip={[300, 72]} angle={-55} />
    {dash(298, 62)}{dash(382, 68)}{dash(392, 135)}{dash(331, 157)}{dash(280, 127)}
  </>,
  <>
    <Arr a={[510, 87]} b={[528, 72]} w={2} head={5} />
    <Arr a={[578, 72]} b={[598, 88]} w={2} head={5} />
    <Arr a={[610, 120]} b={[600, 150]} w={2} head={5} />
    <Arr a={[560, 178]} b={[542, 178]} w={2} head={5} />
    <Arr a={[498, 152]} b={[495, 122]} w={2} head={5} />
    <Box x={553} y={65} /><Box x={607} y={104} /><Box x={580} y={167} /><Box x={517} y={167} /><Box x={499} y={104} />
  </>,
  <>
    <circle cx={769} cy={118} r={60} fill="none" stroke={STROKE} strokeWidth="2.500" />
    <Box x={770} y={65} /><Box x={824} y={104} /><Box x={802} y={167} /><Box x={733} y={167} /><Box x={715} y={104} />
  </>,
  <>
    {ring(123, 285, 58)}
    <polygon points="78,236 92,240 78,258 66,248" fill="#fff" stroke={STROKE} strokeWidth="2.500" />
    <path d="M115 330h18M115 338h18" stroke={STROKE} strokeWidth="2.500" />
    <Box x={124} y={232} w={56} h={30} /><Box x={179} y={280} w={54} h={30} /><Box x={157} y={334} w={54} h={30} /><Box x={88} y={334} w={54} h={30} /><Box x={67} y={280} w={54} h={30} />
  </>,
  <>
    <Box x={337} y={240} w={60} h={30} /><Box x={286} y={325} w={60} h={30} /><Box x={391} y={325} w={60} h={30} />
    <Hollow a={[323, 265]} b={[286, 301]} />
    <Hollow a={[355, 265]} b={[392, 301]} />
    <Hollow a={[320, 325]} b={[357, 325]} both />
  </>,
  <>
    <Band d="M498 300A58 58 0 0 1 530 235" tip={[548, 233]} angle={0} inner="#fff" width={9} />
    <Band d="M556 232A56 56 0 0 1 606 290" tip={[610, 306]} angle={90} inner="#fff" width={9} />
    <Band d="M590 326A58 58 0 0 1 525 328" tip={[510, 322]} angle={205} inner="#fff" width={9} />
    <Slice x={553} y={283} r={46} from={-90} to={30} gap={2} />
    <Slice x={553} y={283} r={46} from={30} to={150} gap={2} />
    <Slice x={553} y={283} r={46} from={150} to={270} gap={2} />
  </>,
  <>
    <Slice x={771} y={283} r={58} from={-90} to={30} gap={4} />
    <Slice x={771} y={283} r={58} from={30} to={150} gap={4} />
    <Slice x={771} y={283} r={58} from={150} to={270} gap={4} />
  </>,
  <>
    {ring(123, 453, 52)}
    <Round x={123} y={453} r={23} /><Round x={122} y={402} r={17} /><Round x={176} y={453} r={17} /><Round x={122} y={505} r={17} /><Round x={69} y={453} r={17} />
  </>,
  <>
    <path d="M340 403v97M288 453h104" stroke={STROKE} strokeWidth="3" />
    <Round x={340} y={453} /><Round x={340} y={403} /><Round x={392} y={453} /><Round x={340} y={500} /><Round x={288} y={453} />
  </>,
  <>
    <Round x={555} y={453} r={17} /><Round x={555} y={402} r={16} /><Round x={610} y={453} r={16} /><Round x={555} y={505} r={16} /><Round x={500} y={453} r={16} />
    <Hollow a={[555, 435]} b={[555, 418]} />
    <Hollow a={[573, 453]} b={[594, 453]} />
    <Hollow a={[555, 471]} b={[555, 489]} />
    <Hollow a={[537, 453]} b={[516, 453]} />
  </>,
  <>
    <circle cx={769} cy={453} r={36} fill="#fff" stroke={STROKE} strokeWidth="2.500" />
    <Round x={769} y={406} fill="#fff" /><Round x={815} y={450} fill="#fff" /><Round x={769} y={497} fill="#fff" /><Round x={722} y={450} fill="#fff" />
    {dash(769, 453)}
  </>,
  <>
    {[[40, 557], [142, 557], [40, 643], [142, 643]].map(([x, y]) => (
      <g key={`${x}-${y}`}>
        <rect x={x} y={y} width={63} height={40} fill="#fff" stroke={STROKE} strokeWidth="2.500" />
        <circle cx={x + 10} cy={y + 13} r={2.500} fill="none" stroke={DASH} />
        <path d={`M${x + 17} ${y + 13}h14`} stroke={DASH} strokeWidth="2" />
      </g>
    ))}
    <Slice x={122} y={618} r={54} from={180} to={270} gap={3} />
    <Slice x={122} y={618} r={54} from={-90} to={0} gap={3} />
    <Slice x={122} y={618} r={54} from={0} to={90} gap={3} />
    <Slice x={122} y={618} r={54} from={90} to={180} gap={3} />
    <path d="M106 608l14-8M138 628l-14 8" stroke="#7c7c7c" strokeWidth="3" />
  </>,
  <>
    <Gear x={345} y={590} r={27} /><Gear x={307} y={625} r={25} /><Gear x={362} y={652} r={36} />
    <Band d="M303 590Q306 572 316 562" tip={[326, 552]} angle={-50} width={9} />
    <Band d="M298 585Q284 596 274 606" tip={[262, 622]} angle={125} width={9} />
    <Band d="M405 686Q412 640 392 615" tip={[382, 603]} angle={-125} width={11} />
  </>,
  <>
    <path d="M553 585v30M535 645l-28 18M571 645l28 18" stroke={STROKE} strokeWidth="2.500" />
    <Box x={553} y={572} w={30} h={28} /><Box x={553} y={632} w={36} h={40} /><Box x={497} y={665} w={30} h={28} /><Box x={610} y={665} w={30} h={28} />
  </>,
  <>
    <Band d="M750 568A25 25 0 0 1 786 600" tip={[778, 612]} angle={120} width={11} />
    <Band d="M772 603A26 26 0 0 0 738 642" tip={[745, 652]} angle={60} width={11} />
    <Band d="M762 640A24 24 0 1 1 752 682" tip={[742, 680]} angle={180} width={11} />
    {dash(770, 585)}{dash(755, 623)}{dash(770, 660)}
  </>,
]

const COL_CENTERS = [122, 338, 553, 770]
const ROW_CENTERS = [110, 281, 452, 623]

const CATEGORIES: { name: string; icon: ReactNode }[] = [
  { name: 'Todos', icon: <path d="M1 1h10l4 4-4 4H6l3-3-3-2H3zM6.500 8.500h9v8h-9zM8.500 11h1M11 11h3M8.500 13.500h1M11 13.500h3" fill="#8d8d8d" stroke="#6a6a6a" strokeWidth="0.6" /> },
  { name: 'Lista', icon: <path d="M1 3h4v3H1zM7 3h9v3H7zM1 8h4v3H1zM7 8h9v3H7zM1 13h4v3H1zM7 13h9v3H7z" fill="#9a9a9a" stroke="#777" strokeWidth="0.5" /> },
  { name: 'Proceso', icon: <path d="M0 9l3-3 2 3-2 3zM6 9l3-3 2 3-2 3zM12 9l3-3 2 3-2 3zM3 9h3M9 9h3" fill="none" stroke="#777" strokeWidth="1.300" /> },
  { name: 'Ciclo', icon: <path d="M7 2h3v2H7zM12 2h3v1h-3zM2 7l3-2 1 2-2 3zM13 7h3v3h-3zM3 11h3v3H3zM7 14h3v3H7zM12 12l3-1-1 4-3 1z" fill="#777" stroke="#666" strokeWidth="0.5" /> },
  { name: 'Jerarquía', icon: <path d="M5.500 1.500h6v4h-6zM1 12.500h4v4H1zM6.500 12.500h4v4h-4zM12 12.500h4v4h-4zM8.500 5.500v7M3 12.500v-3h11v3" fill="none" stroke="#777" /> },
  { name: 'Relación', icon: <><path d="M1.500 1.500h14v15h-14z" fill="#fff" stroke="#777" /><path d="M9 9h6v7H2v-7z" fill="#b5b5b5" /><path d="M5 8V4M3.500 5.500L5 3.500l1.500 2M12 10v4M10.500 12.500l1.500 2 1.500-2" fill="none" stroke="#555" /></> },
  { name: 'Matriz', icon: <path d="M6 1.500h5v4h4.500v6H11v4.500H6V11.500H1.500v-6H6zM8.500 1.500v14.500M1.500 8.500h14" fill="none" stroke="#777" strokeWidth="1.200" /> },
  { name: 'Pirámide', icon: <path d="M8.500 1l8 15h-16zM5.500 6.500h6M3.500 10.500h10" fill="#9a9a9a" stroke="#777" /> },
  { name: 'Imagen', icon: <><path d="M2.500 2.500h12v13h-12z" fill="#fff" stroke="#999" /><path d="M3 15l4-5 3 3 2-2 2 4z" fill="#666" /><circle cx="11" cy="6" r="1.200" fill="#aaa" /></> },
]

function PreviewBlock({ className }: { className: string }) {
  return (
    <div className={`flex h-[34px] w-[55px] shrink-0 items-center justify-center rounded-[2px] shadow-[0_1px_2px_#0004] ${className}`}>
      <span className="h-px w-[14px] bg-white" />
    </div>
  )
}

function PreviewArrow({ color }: { color: string }) {
  return (
    <svg width="13" height="12" viewBox="0 0 13 12" className="mx-[4px] shrink-0">
      <path d="M0 3h7V0l6 6-6 6V9H0z" fill={color} />
    </svg>
  )
}

function SmartArtDialog() {
  return (
    <div className="absolute left-[321px] top-[167px] flex h-[395px] w-[724px] flex-col border border-[#6f9a35] bg-[#9ccd3c] px-[7px] pb-[7px]">
      <div className="relative h-[30px] shrink-0 text-center text-[14px] leading-[29px] tracking-[0.1px] text-[#3a3a3a]">
        Elegir un gráfico SmartArt
        <span className="absolute right-[54px] top-[-3px] text-[13px] font-bold text-[#333]">?</span>
        <div className="absolute right-[-1px] top-0 flex h-5 w-[45px] items-center justify-center bg-[#c75050]">
          <svg width="9" height="9" viewBox="0 0 9 9">
            <path d="M1 1l7 7M8 1L1 8" stroke="#fff" strokeWidth="1.600" />
          </svg>
        </div>
      </div>
      <div className="flex flex-1 flex-col border border-[#83a64b] bg-[#f0f0f0] px-[5px] pt-[6px]">
        <div className="flex h-[316px] border border-[#a0a0a0] bg-white text-[12px] tracking-[0.1px] text-[#555]">
          <div className="w-[134px] shrink-0 border-r border-[#a0a0a0] pt-[10px]">
            {CATEGORIES.map(({ name, icon }) => (
              <div
                key={name}
                className={`ml-[10px] flex h-6 w-[113px] items-center gap-[11px] pl-[4px] ${name === 'Ciclo' ? 'bg-[#c4c4c4]' : ''}`}
              >
                <svg width="17" height="18" viewBox="0 0 17 18" className="shrink-0">{icon}</svg>
                {name}
              </div>
            ))}
          </div>
          <div className="w-[326px] shrink-0 border-r border-[#a0a0a0] pl-[10px] pt-[8px]">
            <div className="grid grid-cols-[repeat(4,72px)] grid-rows-[repeat(4,57px)]">
              {ROW_CENTERS.flatMap((cy, r) =>
                COL_CENTERS.map((cx, c) => (
                  <svg
                    key={`${r}-${c}`}
                    width="72"
                    height="57"
                    viewBox={`${cx - 108} ${cy - 85.5} 216 171`}
                    className="overflow-visible"
                  >
                    {THUMBS[r * 4 + c]}
                  </svg>
                )),
              )}
            </div>
          </div>
          <div className="flex flex-1 flex-col px-[1px] pb-[1px]">
            <div className="flex items-center pl-[12px] pt-[81px]">
              <PreviewBlock className="bg-gradient-to-b from-[#f08a48] to-[#c9581a]" />
              <PreviewArrow color="#dc6a2b" />
              <PreviewBlock className="bg-gradient-to-b from-[#b8b8b8] to-[#787878]" />
              <PreviewArrow color="#999" />
              <PreviewBlock className="bg-gradient-to-b from-[#f8c820] to-[#c08f0c]" />
            </div>
            <div className="mt-auto pl-[12px] text-[11px] font-semibold leading-4 tracking-[0.1px] text-[#555]">Proceso básico</div>
            <div className="mb-[1px] mt-[3px] h-[101px] border border-[#a0a0a0] pl-[9px] pr-[3px] pt-[2px] text-[11px] leading-[13px] tracking-[0.05px]">
              Utilícelo para mostrar una progresión o secuencia de pasos de una tarea, proceso o flujo de trabajo.
            </div>
          </div>
        </div>
        <div className="mt-[4px] flex justify-end gap-[11px] pr-[1px] text-[11.5px] text-[#333]">
          <div className="flex h-[21px] w-[73px] items-center justify-center border border-[#3d85bd] bg-[#efefef]">Aceptar</div>
          <div className="flex h-[21px] w-[73px] items-center justify-center border border-[#ababab] bg-[#efefef]">Cancelar</div>
        </div>
      </div>
    </div>
  )
}

function HiddenChart() {
  return (
    <div className="absolute left-[1045px] top-[288px] flex h-[194px] w-[31px] flex-col border-y border-r border-[#d9d9d9] bg-white pt-[48px]">
      {[0, 1, 2, 3, 4, 5, 6].map((i) => (
        <div key={i} className="h-[19px] w-[16px] shrink-0 border-t border-[#d9d9d9]" />
      ))}
    </div>
  )
}

export default function App() {
  return (
    <div className="relative h-[728px] w-[1366px] overflow-hidden bg-white font-['Open_Sans',sans-serif]">
      <TitleBar />
      <Ribbon />
      <FormulaBar />
      <Sheet />
      <SheetTabs />
      <StatusBar />
      <HiddenChart />
      <SmartArtDialog />
    </div>
  )
}
